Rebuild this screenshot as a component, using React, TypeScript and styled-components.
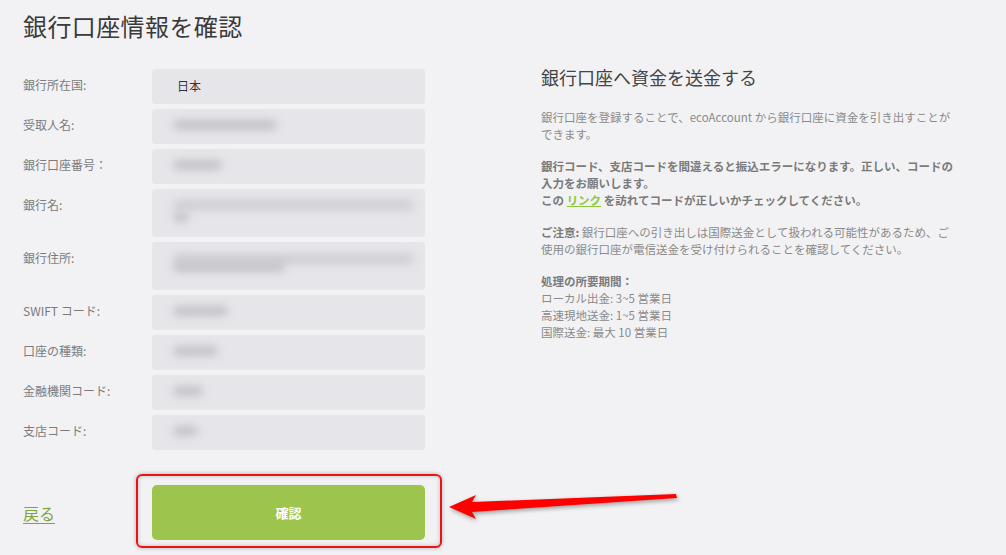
import React from "react";
import styled, { createGlobalStyle } from "styled-components";

const GlobalStyle = createGlobalStyle`
  html, body { margin: 0; padding: 0; background: #f2f2f4; }
  body { font-family: "Noto Sans CJK JP", "Noto Sans", "Liberation Sans", sans-serif; }
  * { box-sizing: border-box; }
`;

const Page = styled.div`
  display: flex;
  align-items: flex-start;
  width: 1006px;
  height: 555px;
  padding: 10px 0 0 23px;
  overflow: hidden;
`;

const LeftColumn = styled.div`
  width: 402px;
  display: flex;
  flex-direction: column;
`;

const Title = styled.h1`
  margin: 0 0 28px;
  font-size: 24px;
  line-height: 31px;
  font-weight: 400;
  color: #3a3a3a;
  letter-spacing: 0.4px;
`;

const Form = styled.div`
  display: flex;
  flex-direction: column;
  gap: 5px;
`;

const Row = styled.div`
  display: grid;
  grid-template-columns: 129px 273px;
`;

const Label = styled.div`
  padding-top: 7px;
  font-size: 12px;
  line-height: 17px;
  color: #7b7b7b;
`;

const Field = styled.div<{ $tall?: boolean }>`
  height: ${(p) => (p.$tall ? "48px" : "35px")};
  background: #e6e6ea;
  border-radius: 3px;
  padding: 8px 0 0 25px;
  font-size: 12px;
  line-height: 17px;
  color: #333;
  display: flex;
  flex-direction: column;
  gap: 3px;
  overflow: hidden;
`;

const RedactedLine = styled.div`
  position: relative;
  height: 17px;
`;

const Blur = styled.div<{ $left: number; $width: number; $top: number; $dark?: boolean }>`
  position: absolute;
  left: ${(p) => p.$left}px;
  top: ${(p) => p.$top}px;
  width: ${(p) => p.$width}px;
  height: 10px;
  border-radius: 5px;
  background: ${(p) => (p.$dark ? "#c2c2c8" : "#cdcdd3")};
  filter: blur(4px);
`;

const Footer = styled.div`
  margin-top: 35px;
  display: grid;
  grid-template-columns: 129px 273px;
  align-items: center;
`;

const BackLink = styled.a`
  font-size: 16px;
  color: #7fa53a;
  text-decoration: underline;
  text-underline-offset: 3px;
  cursor: pointer;
`;

const ButtonWrap = styled.div`
  position: relative;
`;

const ConfirmButton = styled.button`
  width: 273px;
  height: 55px;
  border: none;
  border-radius: 5px;
  background: #9dc44d;
  color: #fff;
  font-family: inherit;
  font-size: 13px;
  font-weight: 700;
  cursor: pointer;
`;

const Highlight = styled.div`
  position: absolute;
  top: -11px;
  left: -16px;
  right: -17px;
  bottom: -8px;
  border: 2px solid #ee1111;
  border-radius: 6px;
  box-shadow: 0 0 4px rgba(0, 0, 0, 0.28), inset 0 0 4px rgba(0, 0, 0, 0.22);
  pointer-events: none;
`;

const Arrow = styled.svg`
  position: absolute;
  left: 293px;
  top: 3px;
  overflow: visible;
  filter: drop-shadow(1px 2px 2px rgba(0, 0, 0, 0.35));
`;

const RightColumn = styled.div`
  margin-left: 116px;
  margin-top: 55px;
  width: 430px;
`;

const SubTitle = styled.h2`
  margin: 0 0 20px;
  font-size: 18px;
  line-height: 24px;
  font-weight: 400;
  color: #444;
`;

const Paragraph = styled.p`
  margin: 0 0 15px;
  font-size: 11.5px;
  line-height: 17px;
  color: #8a8a8a;
  white-space: nowrap;
`;

const Strong = styled.span`
  font-weight: 700;
  color: #7a7a7a;
`;

const GreenLink = styled.a`
  color: #8dc63f;
  text-decoration: underline;
  cursor: pointer;
`;

type Bar = { left?: number; width: number; top?: number; dark?: boolean };

const rows: { label: string; value?: string; tall?: boolean; bars?: Bar[] }[] = [
  { label: "銀行所在国:", value: "日本" },
  { label: "受取人名:", bars: [{ width: 104, dark: true }] },
  { label: "銀行口座番号：", bars: [{ width: 49, dark: true }] },
  {
    label: "銀行名:",
    tall: true,
    bars: [
      { width: 241 },
      { width: 16, top: 12, dark: true },
    ],
  },
  {
    label: "銀行住所:",
    tall: true,
    bars: [
      { width: 241, top: 1 },
      { width: 112, top: 9, dark: true },
    ],
  },
  { label: "SWIFT コード:", bars: [{ width: 55, dark: true }] },
  { label: "口座の種類:", bars: [{ width: 45, dark: true }] },
  { label: "金融機関コード:", bars: [{ width: 30, dark: true }] },
  { label: "支店コード:", bars: [{ width: 25, dark: true }] },
];

export default function App() {
  return (
    <>
      <GlobalStyle />
      <Page>
        <LeftColumn>
          <Title>銀行口座情報を確認</Title>
          <Form>
            {rows.map((r) => (
              <Row key={r.label}>
                <Label>{r.label}</Label>
                <Field $tall={r.tall}>
                  {r.value ? (
                    <span>{r.value}</span>
                  ) : (
                    <RedactedLine>
                      {r.bars?.map((b, i) => (
                        <Blur
                          key={i}
                          $left={(b.left ?? 0) - 4}
                          $width={b.width}
                          $top={3 + (b.top ?? 0)}
                          $dark={b.dark}
                        />
                      ))}
                    </RedactedLine>
                  )}
                </Field>
              </Row>
            ))}
          </Form>
          <Footer>
            <div>
              <BackLink>戻る</BackLink>
            </div>
            <ButtonWrap>
              <ConfirmButton>確認</ConfirmButton>
              <Highlight />
              <Arrow width="240" height="40" viewBox="0 0 240 40">
                <polygon
                  points="4,19 31,7 27,14 231,6 232,10 27,24 31,31"
                  fill="#ff0000"
                />
              </Arrow>
            </ButtonWrap>
          </Footer>
        </LeftColumn>
        <RightColumn>
          <SubTitle>銀行口座へ資金を送金する</SubTitle>
          <Paragraph>
            銀行口座を登録することで、ecoAccount から銀行口座に資金を引き出すことが
            <br />
            できます。
          </Paragraph>
          <Paragraph>
            <Strong>
              銀行コード、支店コードを間違えると振込エラーになります。正しい、コードの
              <br />
              入力をお願いします。
              <br />
              この <GreenLink>リンク</GreenLink> を訪れてコードが正しいかチェックしてください。
            </Strong>
          </Paragraph>
          <Paragraph>
            <Strong>ご注意:</Strong> 銀行口座への引き出しは国際送金として扱われる可能性があるため、ご
            <br />
            使用の銀行口座が電信送金を受け付けられることを確認してください。
          </Paragraph>
          <Paragraph>
            <Strong>処理の所要期間：</Strong>
            <br />
            ローカル出金: 3~5 営業日
            <br />
            高速現地送金: 1~5 営業日
            <br />
            国際送金: 最大 10 営業日
          </Paragraph>
        </RightColumn>
      </Page>
    </>
  );
}
